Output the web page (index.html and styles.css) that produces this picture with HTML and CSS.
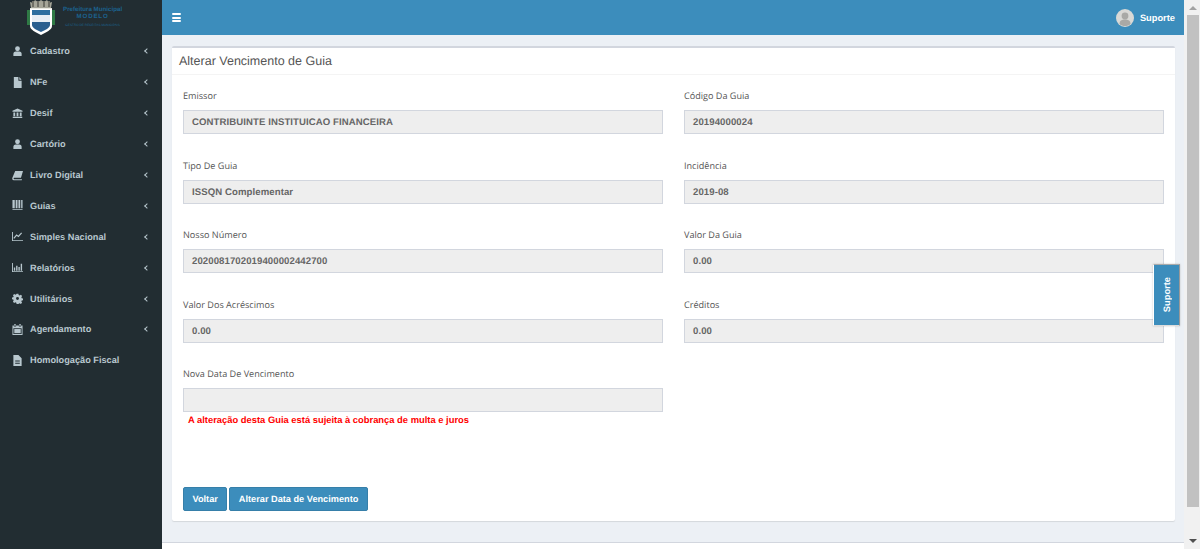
FILE: index.html
```html
<!DOCTYPE html>
<html lang="pt-BR">
<head>
<meta charset="utf-8">
<title>Alterar Vencimento de Guia</title>
<link rel="stylesheet" href="styles.css">
</head>
<body>
<div class="app">
  <aside class="sidebar">
    <div class="logo">
      <svg class="crest" width="28" height="35" viewBox="0 0 28 35">
        <path d="M4 8L3 2l3 1 2-3 3 2 3-2 3 2 3-2 2 3 3-1-1 6z" fill="#a5a598"/>
        <path d="M5 1h2v6H5zM10 1h2v6h-2zM16 1h2v6h-2zM21 1h2v6h-2z" fill="#6f6f66"/>
        <rect x="0" y="10" width="3" height="15" fill="#2f7a45"/>
        <rect x="25" y="10" width="3" height="15" fill="#2f7a45"/>
        <rect x="3" y="8" width="22" height="1.500" fill="#e8e8e0"/>
        <path d="M3 9h22v17c0 4-6 6-11 9-5-3-11-5-11-9z" fill="#fff"/>
        <path d="M5 10h18v5H5z" fill="#2f6f9f"/>
        <path d="M5 15h18v7H5z" fill="#e8eef4"/>
        <path d="M5 22h18v3c0 3-5 5-9 7-4-2-9-4-9-7z" fill="#2a5f8f"/>
      </svg>
      <div class="logo-text">
        <div class="logo-title">Prefeitura Municipal</div>
        <div class="logo-title logo-name">MODELO</div>
        <div class="logo-sub">GESTÃO DE RECEITAS MUNICIPAIS</div>
      </div>
    </div>
    <nav class="menu">
      <a class="item"><svg class="ico" viewBox="0 0 12 12"><circle cx="6" cy="3" r="2.600"/><path d="M1.500 11V8.500C1.500 6.800 3 6 4 6h4c1 0 2.500.8 2.500 2.500V11z"/></svg><span class="lbl">Cadastro</span><span class="chev"></span></a>
      <a class="item"><svg class="ico" viewBox="0 0 12 12"><path d="M2 0h5v4h3.500v8H2zM8 0l2.500 3H8z"/></svg><span class="lbl">NFe</span><span class="chev"></span></a>
      <a class="item"><svg class="ico" viewBox="0 0 12 12"><path d="M6 .5l5.500 2.500v1H.5V3zM1.500 5h2v4h-2zM5 5h2v4H5zM8.500 5h2v4h-2zM.8 9.500h10.400V11H.8z"/></svg><span class="lbl">Desif</span><span class="chev"></span></a>
      <a class="item"><svg class="ico" viewBox="0 0 12 12"><circle cx="6" cy="3" r="2.600"/><path d="M1.500 11V8.500C1.500 6.800 3 6 4 6h4c1 0 2.500.8 2.500 2.500V11z"/></svg><span class="lbl">Cartório</span><span class="chev"></span></a>
      <a class="item"><svg class="ico" viewBox="0 0 12 12"><path d="M3.500 1H12L9.800 8.500H2.500C1.500 8.500 1.500 10 2.500 10h8.500l-.4 1.200H2C.4 11.200 0 9.800.4 8.500z"/></svg><span class="lbl">Livro Digital</span><span class="chev"></span></a>
      <a class="item"><svg class="ico" viewBox="0 0 12 12"><path d="M.5 0h2.500v9H.5zM4 0h2v9H4zM7 0h2v9H7zM10 0h1.500v9H10zM.5 10h11v1H.5z"/></svg><span class="lbl">Guias</span><span class="chev"></span></a>
      <a class="item"><svg class="ico" viewBox="0 0 12 12"><path d="M0 1h1v9h11v1H0z"/><path d="M2 8l3-3.500 2 1.500 3.500-4" fill="none" stroke="#b8c7ce" stroke-width="1.300"/></svg><span class="lbl">Simples Nacional</span><span class="chev"></span></a>
      <a class="item"><svg class="ico" viewBox="0 0 12 12"><path d="M0 1h1v9h11v1H0zM2 6h1.500v3.500H2zM4.500 4H6v5.500H4.500zM7 5.500h1.500v4H7zM9.500 2H11v7.500H9.500z"/></svg><span class="lbl">Relatórios</span><span class="chev"></span></a>
      <a class="item"><svg class="ico" viewBox="0 0 12 12"><path fill-rule="evenodd" d="M5 .8h2l.3 1.500 1.100.5 1.300-.8 1.300 1.400-.8 1.200.4 1.100 1.400.3v2l-1.400.3-.4 1.100.8 1.200-1.400 1.400-1.200-.8-1.100.4L7 11.900H5l-.3-1.400-1.100-.4-1.200.8L1 9.500l.8-1.200-.4-1.100L0 6.900v-2l1.400-.3.400-1.100L1 2.400l1.400-1.400 1.200.8 1.100-.5zM6 4.300a1.600 1.600 0 100 3.200 1.600 1.600 0 000-3.200z"/></svg><span class="lbl">Utilitários</span><span class="chev"></span></a>
      <a class="item"><svg class="ico" viewBox="0 0 12 12"><path d="M2.500 0h1.500v2H2.500zM8 0h1.500v2H8zM.5 1.500h1.500v1.200h2.500V1.500h3v1.200h2.500V1.500h1.500V12H.5zM1.500 4.500v6.500h9V4.500z"/><path d="M2.500 5.500h7v4.500h-7z"/></svg><span class="lbl">Agendamento</span><span class="chev"></span></a>
      <a class="item"><svg class="ico" viewBox="0 0 12 12"><path d="M1.500 0H7l3.500 3.500V12h-9zM3.500 6v1h5V6zM3.500 8.500v1h5v-1z" fill-rule="evenodd"/></svg><span class="lbl">Homologação Fiscal</span></a>
    </nav>
  </aside>

  <div class="page">
    <header class="topbar">
      <span class="burger"><i></i><i></i><i></i></span>
      <div class="user">
        <svg class="avatar" viewBox="0 0 18 18"><circle cx="9" cy="9" r="9" fill="#d9d9d6"/><circle cx="9" cy="7" r="3.400" fill="#a9a9a6"/><path d="M3.500 15c0-3.500 2.500-4.500 5.500-4.500s5.500 1 5.500 4.500c-1.500 1.500-3.500 2-5.500 2s-4-.5-5.500-2z" fill="#a9a9a6"/></svg>
        <span>Suporte</span>
      </div>
    </header>
    <main class="content">
      <section class="box">
        <h1 class="box-title">Alterar Vencimento de Guia</h1>
        <div class="grid">
          <div class="field"><label>Emissor</label><div class="input">CONTRIBUINTE INSTITUICAO FINANCEIRA</div></div>
          <div class="field"><label>Código Da Guia</label><div class="input">20194000024</div></div>
          <div class="field"><label>Tipo De Guia</label><div class="input">ISSQN Complementar</div></div>
          <div class="field"><label>Incidência</label><div class="input">2019-08</div></div>
          <div class="field"><label>Nosso Número</label><div class="input">2020081702019400002442700</div></div>
          <div class="field"><label>Valor Da Guia</label><div class="input">0.00</div></div>
          <div class="field"><label>Valor Dos Acréscimos</label><div class="input">0.00</div></div>
          <div class="field"><label>Créditos</label><div class="input">0.00</div></div>
          <div class="field"><label>Nova Data De Vencimento</label><div class="input"></div><p class="warn">A alteração desta Guia está sujeita à cobrança de multa e juros</p></div>
        </div>
        <div class="actions">
          <button class="btn">Voltar</button>
          <button class="btn">Alterar Data de Vencimento</button>
        </div>
      </section>
    </main>
    <footer class="footer"></footer>
    <div class="tab"><span>Suporte</span></div>
  </div>

  <div class="scrollbar"><span class="arrow"></span><span class="thumb"></span><span class="arrow-down"></span></div>
</div>
</body>
</html>
```

FILE: styles.css
```css
* { box-sizing: border-box; }
html, body { margin: 0; height: 100%; overflow: hidden; }
body { font-family: "Liberation Sans", Arial, sans-serif; background: #ecf0f5; text-rendering: geometricPrecision; }
.app { display: flex; width: 1200px; height: 549px; }

.sidebar { width: 162px; flex: none; background: #222d32; }
.logo { height: 36px; display: flex; padding-left: 27px; gap: 8px; overflow: hidden; }
.crest { flex: none; }
.logo-text { text-align: center; padding-top: 6px; color: #1c628f; font-family: "Liberation Sans", sans-serif; font-weight: 700; font-size: 6.200px; line-height: 7px; white-space: nowrap; }
.logo-name { letter-spacing: .8px; }
.logo-sub { font-size: 3.200px; margin-top: 3px; line-height: 5px; font-weight: 400; }

.menu { display: flex; flex-direction: column; }
.item { height: 30.900px; display: flex; align-items: center; padding: 0 12px; color: #b8c7ce; font-size: 9.200px; font-weight: 700; }
.ico { width: 11px; height: 11px; fill: #b8c7ce; flex: none; margin-right: 7px; }
.lbl { flex: 1; white-space: nowrap; }
.chev { width: 4px; height: 4px; border-left: 1px solid #b8c7ce; border-bottom: 1px solid #b8c7ce; transform: rotate(45deg); margin-right: 1px; }

.page { position: relative; flex: 1; min-width: 0; display: flex; flex-direction: column; }
.topbar { height: 35px; flex: none; background: #3c8dbc; display: flex; align-items: center; justify-content: space-between; padding: 0 9px 0 10px; color: #fff; }
.burger { display: flex; flex-direction: column; gap: 1.500px; width: 9px; }
.burger i { height: 2px; background: #fff; display: block; border-radius: 1px; }
.user { display: flex; align-items: center; gap: 6px; font-size: 9.300px; font-weight: 700; }
.avatar { width: 18px; height: 18px; }

.content { flex: 1; padding: 11px 9px 21px 10px; min-height: 0; }
.box { height: 100%; background: #fff; border-top: 2px solid #d2d6de; border-radius: 2px; box-shadow: 0 1px 1px rgba(0,0,0,.1); display: flex; flex-direction: column; }
.box-title { margin: 0; height: 27px; padding: 5px 7px 0; font-size: 12.500px; line-height: 17px; font-weight: 400; color: #555; border-bottom: 1px solid #f4f4f4; }
.grid { display: grid; grid-template-columns: 480px 480px; column-gap: 21px; grid-auto-rows: 69.600px; padding: 14px 11px 0; }
.field { display: flex; flex-direction: column; }
.field label { font-family: "Open Sans", sans-serif; font-size: 9.100px; line-height: 14px; height: 21px; color: #555; }
.input { height: 24px; flex: none; background: #eee; border: 1px solid #d2d6de; color: #666; padding: 0 8px; font-size: 9.600px; font-weight: 700; line-height: 24px; letter-spacing: .08px; white-space: nowrap; }
.warn { margin: 2px 0 0 5px; color: #f00; font-size: 9.400px; font-weight: 700; line-height: 11px; white-space: nowrap; }

.actions { margin-top: auto; display: flex; gap: 2px; padding: 0 11px 10px; }
.btn { height: 24px; padding: 0 8.500px; background: #3c8dbc; border: 1px solid #367fa9; border-radius: 2px; color: #fff; font-family: inherit; font-size: 9.200px; font-weight: 700; text-rendering: geometricPrecision; }

.footer { height: 7px; flex: none; background: #fff; border-top: 1px solid #d2d6de; }

.tab { position: absolute; top: 264px; left: 991px; width: 27px; height: 62px; background: #3c8dbc; border: 1px solid #fff; border-right-color: #999; border-top-color: #aaa; border-bottom-color: #ddd; display: flex; align-items: center; justify-content: center; color: #fff; font-size: 9.300px; font-weight: 700; box-shadow: 0 0 2px rgba(0,0,0,.2); }
.tab span { writing-mode: vertical-rl; transform: rotate(180deg); }

.scrollbar { width: 16px; flex: none; background: #f1f1f1; display: flex; flex-direction: column; align-items: center; padding-left: 1px; }
.arrow { width: 0; height: 0; margin: 6px 0 5px; border-left: 4px solid transparent; border-right: 4px solid transparent; border-bottom: 4px solid #a3a3a3; }
.thumb { width: 12px; height: 492px; flex: none; background: #c1c1c1; }
.arrow-down { width: 0; height: 0; margin-top: 32px; border-left: 4px solid transparent; border-right: 4px solid transparent; border-top: 4px solid #505050; }
```
